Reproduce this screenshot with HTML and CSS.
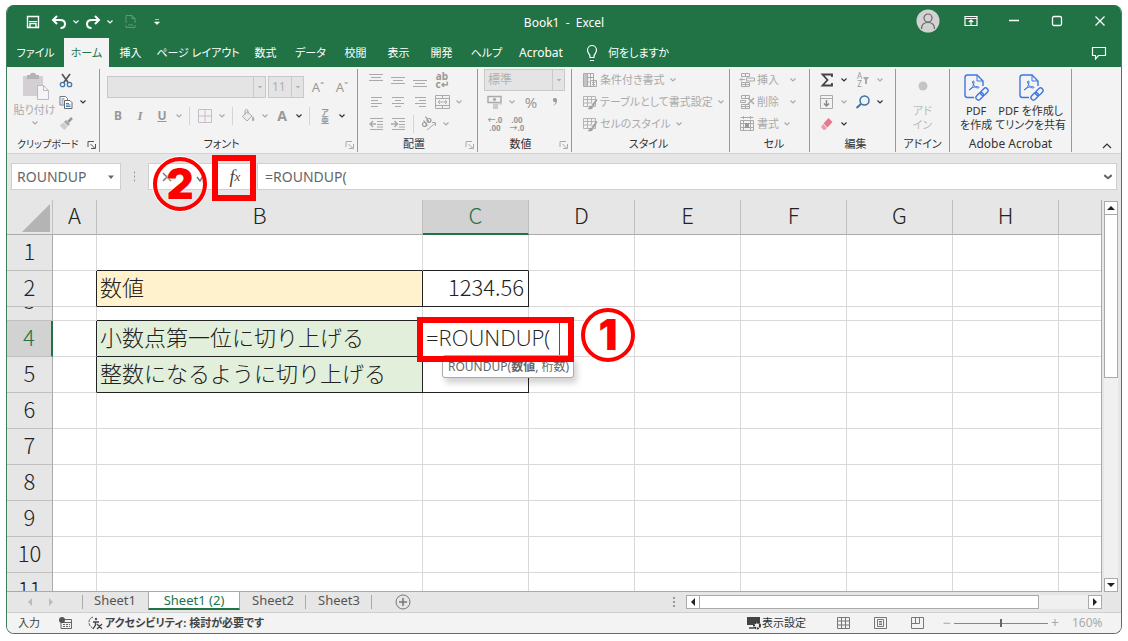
FILE: index.html
```html
<!DOCTYPE html>
<html lang="ja">
<head>
<meta charset="utf-8">
<title>Book1 - Excel</title>
<link rel="stylesheet" href="styles.css">
</head>
<body>
<svg class="defs" aria-hidden="true">
  <defs>
    <symbol id="chev" viewBox="0 0 8 8"><path d="M1.500 2.500 4 5l2.500-2.500" fill="none" stroke="currentColor" stroke-width="1.200"/></symbol>
    <symbol id="down" viewBox="0 0 8 8"><path d="M1 2.500h6L4 6z" fill="currentColor"/></symbol>
    <symbol id="up" viewBox="0 0 8 8"><path d="M0 6h8L4 2z" fill="currentColor"/></symbol>
    <symbol id="launch" viewBox="0 0 10 10"><path d="M1 7V1.500h6M3.500 4l4 4M8.500 4v4.500H4" fill="none" stroke="currentColor"/></symbol>
    <symbol id="pdf" viewBox="0 0 26 28"><g fill="none" stroke="#3f76e0" stroke-width="1.400"><path d="M11 24.500H4.500a2.500 2.500 0 0 1-2.500-2.500V4.500A2.500 2.500 0 0 1 4.500 2H14l6 6v5"/><path d="M14 2v6h6" stroke-width="1"/><path d="M6 17c3-1 5-5 5-8 0-1.500-1.600-1.500-1.400 0 .4 3 3 6 5.400 6 1.500 0 1.200-1.500-.6-1.400-3 .1-6 1-8.400 3.400z" stroke-width="1"/><g transform="rotate(-45 19 21)"><rect x="11.500" y="18.500" width="8.500" height="5" rx="2.500"/><rect x="18" y="18.500" width="8.500" height="5" rx="2.500"/></g></g></symbol>
    <symbol id="tablebrush" viewBox="0 0 16 16"><path d="M1.500 2.500h12v10h-12zM1.500 5.500h12M1.500 9h9M5.500 2.500v10M9.500 2.500v6" fill="none" stroke="#b4b4b4"/><path d="m14.500 5-5 6 2 1.500L15.500 6z" fill="#a0a0a0" stroke="none"/><path d="M9 11.500c-1.500.5-1.500 2.500-3.500 3.500 3 .8 5.500 0 5.500-2z" fill="#a0a0a0" stroke="none"/></symbol>
  </defs>
</svg>

<div class="window">
  <header class="titlebar">
    <div class="quick">
      <button class="ib" aria-label="上書き保存"><svg width="14" height="14" viewBox="0 0 14 14"><path d="M1.500 1.500h11v11h-11zM4 12.500V8.500h6v4" fill="none" stroke="#fff" stroke-width="1.400"/><path d="M3 6.500h8" stroke="#fff" stroke-width="1"/></svg></button>
      <span class="pair"><button class="ib" aria-label="元に戻す"><svg width="16" height="14" viewBox="0 0 16 14"><path d="M6 1 2 5l4 4M2 5h7c3 0 5 1.500 5 4s-2 4-4.500 4" fill="none" stroke="#fff" stroke-width="2"/></svg></button><button class="cb" aria-label="元に戻す一覧"><svg><use href="#chev"/></svg></button><button class="ib" aria-label="やり直し"><svg width="16" height="14" viewBox="0 0 16 14"><path d="m10 1 4 4-4 4M14 5H7C4 5 2 6.500 2 9s2 4 4.500 4" fill="none" stroke="#fff" stroke-width="2"/></svg></button><button class="cb" aria-label="やり直し一覧"><svg><use href="#chev"/></svg></button></span>
      <button class="ib faint" aria-label="リンクを共有"><svg width="14" height="15" viewBox="0 0 14 15"><path d="M2 9V1.500h6l3 3V9M8 1.500v3h3M2 11v2.500h9V11M4 11h5" fill="none" stroke="currentColor"/></svg></button>
      <button class="ib" aria-label="クイック アクセスのカスタマイズ"><svg width="8" height="8" viewBox="0 0 8 8"><path d="M2 1.500h4M1.500 4h5L4 6.500z" stroke="#fff" stroke-width=".6" fill="#fff"/></svg></button>
    </div>
    <h1 class="title">Book1&nbsp; -&nbsp; Excel</h1>
    <div class="syskeys">
      <button aria-label="アカウント"><svg width="24" height="24" viewBox="0 0 24 24"><circle cx="12" cy="12" r="11.500" fill="#d2d2d2"/><g fill="none" stroke="#666" stroke-width="1.200"><circle cx="12" cy="9" r="4"/><path d="M5.500 20c0-4 2.500-6.500 6.500-6.500s6.500 2.500 6.500 6.500"/></g></svg></button>
      <button aria-label="リボンの表示オプション"><svg width="14" height="12" viewBox="0 0 14 12"><path d="M1 1.500h12v9H1zM1 3.500h12M7 10V5M4.800 7 7 5l2.200 2" fill="none" stroke="#fff" stroke-width="1.200"/></svg></button>
      <button aria-label="最小化"><svg width="12" height="12"><path d="M1 5.500h10" stroke="#fff" stroke-width="1.400"/></svg></button>
      <button aria-label="最大化"><svg width="12" height="12"><rect x="1.500" y="1.500" width="9" height="9" rx="1.500" fill="none" stroke="#fff" stroke-width="1.300"/></svg></button>
      <button aria-label="閉じる"><svg width="12" height="12"><path d="m1.500 1.500 9 9m0-9-9 9" stroke="#fff" stroke-width="1.300"/></svg></button>
    </div>
  </header>

  <nav class="tabs">
    <button class="tab file">ファイル</button>
    <button class="tab active">ホーム</button>
    <button class="tab">挿入</button>
    <button class="tab wide">ページ レイアウト</button>
    <button class="tab">数式</button>
    <button class="tab mid">データ</button>
    <button class="tab">校閲</button>
    <button class="tab">表示</button>
    <button class="tab">開発</button>
    <button class="tab mid">ヘルプ</button>
    <button class="tab acro">Acrobat</button>
    <button class="tell"><svg width="12" height="18" viewBox="0 0 12 18"><path d="M4 13.500V12C3.500 10 1.500 9 1.500 6a4.500 4.500 0 0 1 9 0c0 3-2 4-2.500 6v1.500zM4 16.500h4" fill="none" stroke="#fff" stroke-width="1.200"/></svg>何をしますか</button>
    <button class="comment" aria-label="コメント"><svg width="16" height="14" viewBox="0 0 16 14"><path d="M1.500 1.500h13v8h-7L4.500 13V9.500h-3z" fill="none" stroke="#fff" stroke-width="1.200"/></svg></button>
  </nav>

  <section class="ribbon">
    <div class="group g-clip">
      <div class="gbody clip">
        <button class="paste"><svg width="30" height="30" viewBox="0 0 30 30"><path d="M3 5h20v20H3z" fill="#d3cfd3"/><path d="M7 4h3c0-3 6-3 6 0h3v4H7z" fill="#b5b1b5"/><path d="M17.500 14.500h6l5 5v9h-11z" fill="#f6f4f6" stroke="#bdb9bd"/><path d="M23.500 14.500v5h5" fill="none" stroke="#bdb9bd"/></svg><span>貼り付け</span><svg class="chev"><use href="#chev"/></svg></button>
        <div class="clipcol">
          <div class="line"><button class="ib" aria-label="切り取り"><svg width="14" height="15" viewBox="0 0 14 15"><path d="m3 1 6.500 9M11 1 4.500 10" stroke="#555" stroke-width="1.700"/><g fill="none" stroke="#4378a8" stroke-width="1.300"><circle cx="3.500" cy="11.500" r="2.200"/><circle cx="10.500" cy="11.500" r="2.200"/></g></svg></button></div>
          <div class="line"><button class="ib" aria-label="コピー"><svg width="14" height="15" viewBox="0 0 14 15"><path d="M1 1.500h5.500l2 2V10H1z" fill="#fff" stroke="#777"/><path d="M5.500 5.500H11l2 2v6H5.500z" fill="#fff" stroke="#666"/><path d="M2.500 4h3m-3 2h2m-2 2h2M7 8.500h3M7 10h4.500M7 11.500h4.500" stroke="#3f7fc4"/></svg></button><button class="cb dark" aria-label="コピーの種類"><svg><use href="#chev"/></svg></button></div>
          <div class="line"><button class="ib" aria-label="書式のコピー/貼り付け"><svg width="14" height="14" viewBox="0 0 14 14"><path d="m13 1-4 4" stroke="#9b979b" stroke-width="2.500"/><path d="m7 3 4 4-2 2-4-4z" fill="#aaa6aa"/><path d="m4.500 5.500 4 4-3 3.500-5-4.500z" fill="#cfcbcf"/></svg></button></div>
        </div>
      </div>
      <div class="glabel">クリップボード<button class="lb on" aria-label="クリップボードの詳細"><svg><use href="#launch"/></svg></button></div>
    </div>

    <div class="group g-font">
      <div class="gbody font">
        <div class="line fonttop">
          <span class="combo fname"><input aria-label="フォント" value=""><button aria-label="フォント一覧"><svg><use href="#down"/></svg></button></span>
          <span class="combo fsize"><input aria-label="フォント サイズ" value="11"><button aria-label="サイズ一覧"><svg><use href="#down"/></svg></button></span>
          <button class="ib letter" aria-label="拡大">A<sup>ˆ</sup></button><button class="ib letter" aria-label="縮小">A<sup>ˇ</sup></button>
        </div>
        <div class="line">
          <button class="ib"><b>B</b></button><button class="ib"><i class="ital">I</i></button><button class="ib"><u>U</u></button><button class="cb" aria-label="下線"><svg><use href="#chev"/></svg></button>
          <span class="vr"></span>
          <button class="ib" aria-label="罫線"><svg width="14" height="14"><path d="M.5.500h13v13H.5zM7 .5v13M.5 7h13" fill="none" stroke="#c8bcc8"/></svg></button><button class="cb" aria-label="罫線の種類"><svg><use href="#chev"/></svg></button>
          <span class="vr"></span>
          <button class="ib" aria-label="塗りつぶし"><svg width="14" height="14" viewBox="0 0 14 14"><path d="M6 2.500 1.500 7.500l4.500 4.500L11 7z" fill="#eeeaee" stroke="#aaa"/><path d="M4 6V2a1.500 1.500 0 0 1 3 0v3" fill="none" stroke="#aaa"/><path d="M12 7c2 3 1.500 5 0 5s-1.500-2 0-5z" fill="#aaa"/></svg></button><button class="cb" aria-label="塗りつぶしの色"><svg><use href="#chev"/></svg></button>
          <button class="ib"><b class="big">A</b></button><button class="cb dark" aria-label="フォントの色"><svg><use href="#chev"/></svg></button>
          <span class="vr"></span>
          <button class="ib ruby" aria-label="ふりがな"><span>ア</span><span>亜</span></button><button class="cb dark" aria-label="ふりがな設定"><svg><use href="#chev"/></svg></button>
        </div>
      </div>
      <div class="glabel">フォント<button class="lb" aria-label="フォントの詳細"><svg><use href="#launch"/></svg></button></div>
    </div>

    <div class="group g-align">
      <div class="gbody">
        <div class="line">
          <button class="ib" aria-label="上揃え"><svg width="14" height="14"><path d="M0 1.500h14M2 4.500h10M0 7.500h14"/></svg></button><button class="ib" aria-label="上下中央揃え"><svg width="14" height="14"><path d="M0 4.500h14M2 7.500h10M0 10.500h14"/></svg></button><button class="ib" aria-label="下揃え"><svg width="14" height="14"><path d="M0 7.500h14M2 10.500h10M0 13.500h14"/></svg></button><button class="ib wrap" aria-label="折り返して全体を表示する"><span>ab</span><span>c↵</span></button>
        </div>
        <div class="line">
          <button class="ib" aria-label="左揃え"><svg width="14" height="14"><path d="M2 2.500h11M2 5.500h7M2 8.500h11M2 11.500h7"/></svg></button><button class="ib" aria-label="中央揃え"><svg width="14" height="14"><path d="M1 2.500h12M4 5.500h6M1 8.500h12M4 11.500h6"/></svg></button><button class="ib" aria-label="右揃え"><svg width="14" height="14"><path d="M2 2.500h11M6 5.500h7M2 8.500h11M6 11.500h7"/></svg></button><button class="ib" aria-label="セルを結合"><svg width="15" height="14"><path d="M.5.500h14v13H.5zM.5 3.500h14M.5 10.500h14M7.500.500v3M7.500 10.500v3M3 7h9M5 5 3 7l2 2M10 5l2 2-2 2"/></svg></button><button class="cb" aria-label="結合の種類"><svg><use href="#chev"/></svg></button>
        </div>
        <div class="line">
          <button class="ib" aria-label="インデントを減らす"><svg width="14" height="14"><path d="M1 1.500h13M8 4.500h6M8 7.500h6M1 12.500h13M8 10h6"/><path d="M7 7H1m3-3L1 7l3 3" stroke-width="1.500"/></svg></button><button class="ib" aria-label="インデントを増やす"><svg width="14" height="14"><path d="M1 1.500h13M8 4.500h6M8 7.500h6M1 12.500h13M8 10h6"/><path d="M0 7h6M3.500 4l3 3-3 3" stroke-width="1.500"/></svg></button>
          <span class="vr"></span>
          <button class="ib" aria-label="方向"><svg width="16" height="16" viewBox="0 0 16 16"><g stroke="#999" stroke-width="1.200"><circle cx="3.500" cy="8.500" r="2"/><path d="m2.500 4.500 4 5"/><circle cx="8" cy="4.500" r="2"/><path d="m4.500.500 3.500 5.500"/></g><path d="m6 14 8.500-7M11 6.500h3.500V10"/></svg></button><button class="cb" aria-label="方向の種類"><svg><use href="#chev"/></svg></button>
        </div>
      </div>
      <div class="glabel">配置<button class="lb" aria-label="配置の詳細"><svg><use href="#launch"/></svg></button></div>
    </div>

    <div class="group g-num">
      <div class="gbody">
        <div class="line"><span class="combo numfmt"><input aria-label="表示形式" value="標準"><button aria-label="表示形式一覧"><svg><use href="#down"/></svg></button></span></div>
        <div class="line">
          <button class="ib" aria-label="通貨表示形式"><svg width="16" height="14" viewBox="0 0 16 14"><path d="M1 1.500h13v6H1z" stroke-width="1.500"/><circle cx="7.500" cy="4.500" r="1.200" fill="#aaa"/><path d="M6 9.500h5M6 11.500h5M6 13.500h5M11 8.500h4" stroke="#d0c8cc" stroke-width="2"/></svg></button><button class="cb" aria-label="通貨の種類"><svg><use href="#chev"/></svg></button><button class="ib pct">%</button><button class="ib comma" aria-label="桁区切りスタイル"><svg width="6" height="10"><path d="M3 1a2 2 0 1 0 .5 3.900C3.500 6.500 2.500 7.500 1 8.500 4 8 5.200 5.500 5 3A2 2 0 0 0 3 1z" fill="#999" stroke="none"/></svg></button>
        </div>
        <div class="line">
          <button class="ib dec" aria-label="小数点以下の表示桁数を増やす"><span>←.0</span><span>.00</span></button><button class="ib dec" aria-label="小数点以下の表示桁数を減らす"><span>.00</span><span>→.0</span></button>
        </div>
      </div>
      <div class="glabel">数値<button class="lb" aria-label="数値の詳細"><svg><use href="#launch"/></svg></button></div>
    </div>

    <div class="group g-style">
      <div class="gbody">
        <button class="row"><svg class="pic" viewBox="0 0 16 16"><path d="M1.500 1.500h10v13h-10zM5.500 1.500v13M8.500 1.500v6M1.500 5.500h10M1.500 10h6"/><path d="M2 2h3v12H2z" fill="#c4c4c4" stroke="none"/><path d="M8.500 8.500h6v6h-6zM10 13l3.500-3.500M10 10.500h3M10 12.500h3"/></svg><span>条件付き書式</span><svg class="chev"><use href="#chev"/></svg></button>
        <button class="row"><svg class="pic"><use href="#tablebrush"/></svg><span>テーブルとして書式設定</span><svg class="chev"><use href="#chev"/></svg></button>
        <button class="row"><svg class="pic"><use href="#tablebrush"/></svg><span>セルのスタイル</span><svg class="chev"><use href="#chev"/></svg></button>
      </div>
      <div class="glabel">スタイル</div>
    </div>

    <div class="group g-cell">
      <div class="gbody">
        <button class="row"><svg class="pic" viewBox="0 0 16 16"><path d="M2.500 1.500h8v3h-8zM6.500 1.500v3M2.500 10.500h8v4h-8zM6.500 10.500v4M2.500 12.500h8M7.500 6h8v3h-8zM1 7.500h5M3 5.500l-2 2 2 2"/></svg><span>挿入</span><svg class="chev end"><use href="#chev"/></svg></button>
        <button class="row"><svg class="pic" viewBox="0 0 16 16"><path d="M2.500 1.500h8v3h-8zM6.500 1.500v3M2.500 10.500h8v4h-8zM6.500 10.500v4M2.500 12.500h8M1.500 6.500h5v2h-5z"/><path d="m9 4 6 6m0-6-6 6" stroke-width="1.500"/></svg><span>削除</span><svg class="chev end"><use href="#chev"/></svg></button>
        <button class="row"><svg class="pic" viewBox="0 0 16 16"><path d="M1.500 1.500h13M4.500 0v3M11.500 0v3M1.500 4.500h13v10h-13zM4.500 4.500v10M11.500 4.500v10M1.500 7.500h13M1.500 11.500h13"/><path d="M6 7h4v5H6z" fill="#999" stroke="none"/></svg><span>書式</span><svg class="chev"><use href="#chev"/></svg></button>
      </div>
      <div class="glabel">セル</div>
    </div>

    <div class="group g-edit">
      <div class="gbody">
        <div class="line"><button class="ib" aria-label="合計"><svg width="14" height="14"><path d="M12 4V1.500H2.500L7.500 7l-5 5.500H12V10" stroke="#444" stroke-width="1.800"/></svg></button><button class="cb dark" aria-label="合計の種類"><svg><use href="#chev"/></svg></button><button class="ib sort" aria-label="並べ替えとフィルター"><span class="az"><span>A</span><span>Z</span></span><svg width="6" height="8"><path d="M0 1h6L4 4v4H2V4z" fill="#aaa" stroke="none"/></svg></button><button class="cb" aria-label="並べ替えの種類"><svg><use href="#chev"/></svg></button></div>
        <div class="line"><button class="ib" aria-label="フィル"><svg width="14" height="14"><path d="M.5.500h12v13H.5zM.5 3.500h12"/><path d="M6.500 5v6M4 8.500l2.500 2.500L9 8.500" stroke="#888" stroke-width="1.500"/></svg></button><button class="cb" aria-label="フィルの種類"><svg><use href="#chev"/></svg></button><button class="ib find" aria-label="検索と選択"><svg width="16" height="14"><circle cx="9.500" cy="5.500" r="4.500" stroke="#3b73a8" stroke-width="1.500"/><path d="m6 9-4.500 4" stroke="#3b73a8" stroke-width="2"/></svg></button><button class="cb dark" aria-label="検索の種類"><svg><use href="#chev"/></svg></button></div>
        <div class="line"><button class="ib" aria-label="クリア"><svg width="14" height="14"><path d="m8.500 1 4 4-5 5.500-4-4z" fill="#e8788c" stroke="none"/><path d="m3 7 4 4-2 2H3.500L1 10z" fill="#ee9cab" stroke="none"/></svg></button><button class="cb dark" aria-label="クリアの種類"><svg><use href="#chev"/></svg></button></div>
      </div>
      <div class="glabel">編集</div>
    </div>

    <div class="group g-addin">
      <div class="gbody tall"><button class="tile off"><svg width="26" height="28"><circle cx="13" cy="13" r="4.500" fill="#c4c4c4" stroke="none"/></svg><span>アド</span><span>イン</span></button></div>
      <div class="glabel">アドイン</div>
    </div>

    <div class="group g-acro">
      <div class="gbody tall">
        <button class="tile"><svg width="26" height="28"><use href="#pdf"/></svg><span>PDF</span><span>を作成</span></button>
        <button class="tile"><svg width="26" height="28"><use href="#pdf"/></svg><span>PDF を作成し</span><span>てリンクを共有</span></button>
      </div>
      <div class="glabel latin">Adobe Acrobat</div>
    </div>
    <button class="collapse" aria-label="リボンを折りたたむ"><svg width="10" height="6"><path d="m1 5 4-4 4 4" fill="none" stroke="#333" stroke-width="1.200"/></svg></button>
  </section>

  <section class="fbar">
    <span class="namebox"><input aria-label="名前ボックス" value="ROUNDUP"><button aria-label="名前一覧"><svg><use href="#down"/></svg></button></span>
    <span class="dots"></span>
    <div class="fkeys">
      <button aria-label="キャンセル"><svg width="12" height="12"><path d="m2 2 8 8m0-8-8 8" stroke="#777" stroke-width="1.500"/></svg></button>
      <button aria-label="入力"><svg width="12" height="12"><path d="m2 6 3 4 5-8" fill="none" stroke="#777" stroke-width="1.500"/></svg></button>
      <button class="fx" aria-label="関数の挿入">f<sub>x</sub></button>
      <span class="mark boxfx"></span>
      <span class="num n2">2</span>
    </div>
    <span class="formula"><input aria-label="数式バー" value="=ROUNDUP("><button aria-label="数式バーの展開"><svg width="10" height="10" viewBox="0 0 8 8"><path d="M1 2.500 4 5l3-2.500" fill="none" stroke="#666" stroke-width="1.600"/></svg></button></span>
  </section>

  <main class="sheet">
    <div class="gridwrap">
      <table class="grid">
        <colgroup><col class="c-head"><col class="c-a"><col class="c-b"><col class="c-n"><col class="c-n"><col class="c-n"><col class="c-n"><col class="c-n"><col class="c-n"><col></colgroup>
        <thead><tr><th class="corner"><svg width="28" height="28"><path d="M28 0v28H0z" fill="#b4b4b4"/></svg></th><th>A</th><th>B</th><th class="sel">C</th><th>D</th><th>E</th><th>F</th><th>G</th><th>H</th><th></th></tr></thead>
        <tbody>
          <tr><th>1</th><td></td><td class="under"></td><td class="under"></td><td></td><td></td><td></td><td></td><td></td><td></td></tr>
          <tr><th>2</th><td class="edge"></td><td class="bx cream">数値</td><td class="bx right">1234.56</td><td></td><td></td><td></td><td></td><td></td><td></td></tr>
          <tr class="thin"><th><div>3</div></th><td></td><td class="under"></td><td class="under"></td><td></td><td></td><td></td><td></td><td></td><td></td></tr>
          <tr><th class="sel">4</th><td class="edge"></td><td class="bx mint">小数点第一位に切り上げる</td><td class="bx cell"><div class="editor"><input aria-label="C4" value="=ROUNDUP("></div><div class="tip">ROUNDUP(<b>数値</b>, 桁数)</div><span class="mark boxcell"></span><span class="num n1">1</span></td><td></td><td></td><td></td><td></td><td></td><td></td></tr>
          <tr><th>5</th><td class="edge"></td><td class="bx mint">整数になるように切り上げる</td><td class="bx"></td><td></td><td></td><td></td><td></td><td></td><td></td></tr>
          <tr><th>6</th><td></td><td></td><td></td><td></td><td></td><td></td><td></td><td></td><td></td></tr>
          <tr><th>7</th><td></td><td></td><td></td><td></td><td></td><td></td><td></td><td></td><td></td></tr>
          <tr><th>8</th><td></td><td></td><td></td><td></td><td></td><td></td><td></td><td></td><td></td></tr>
          <tr><th>9</th><td></td><td></td><td></td><td></td><td></td><td></td><td></td><td></td><td></td></tr>
          <tr><th>10</th><td></td><td></td><td></td><td></td><td></td><td></td><td></td><td></td><td></td></tr>
          <tr><th>11</th><td></td><td></td><td></td><td></td><td></td><td></td><td></td><td></td><td></td></tr>
        </tbody>
      </table>
    </div>
    <div class="vscroll">
      <button aria-label="上へ"><svg><use href="#up"/></svg></button>
      <span class="vthumb"></span>
      <span class="vtrack"></span>
      <button aria-label="下へ"><svg class="flip"><use href="#up"/></svg></button>
    </div>
  </main>

  <footer class="sheetbar">
    <div class="nav"><svg width="6" height="8"><path d="M5 0v8L1 4z" fill="#bbb"/></svg><svg width="6" height="8"><path d="M1 0v8l4-4z" fill="#bbb"/></svg></div>
    <button class="stab first">Sheet1</button>
    <button class="stab cur">Sheet1 (2)</button>
    <button class="stab">Sheet2</button>
    <button class="stab">Sheet3</button>
    <button class="add" aria-label="新しいシート"><svg width="16" height="16"><circle cx="8" cy="8" r="7" fill="none" stroke="#777"/><path d="M4 8h8M8 4v8" stroke="#777" stroke-width="1.500"/></svg></button>
    <span class="dots grip"></span>
    <div class="hscroll">
      <button aria-label="左へ"><svg class="left"><use href="#up"/></svg></button><span class="hthumb"></span><span class="htrack"></span><button aria-label="右へ"><svg class="rightw"><use href="#up"/></svg></button>
    </div>
  </footer>

  <footer class="status">
    <span class="mode">入力</span>
    <svg class="rec" width="13" height="12"><path d="M2 2.500h10.500v9H2zM2 5.500h10" fill="none" stroke="#666"/><path d="M4 7.500h7M4 9.500h7" stroke="#666" stroke-dasharray="2 1"/><circle cx="3" cy="3" r="3" fill="#555"/></svg>
    <button class="acc"><svg width="15" height="14"><path d="M5 1C2 2 1 4 1 6.500S2.500 11 4.500 12" fill="none" stroke="#555" stroke-dasharray="3 1"/><circle cx="8" cy="3" r="1.200" fill="#555"/><path d="M5 6h6M7.500 6v3L5 13M9 8l5 5M14 8l-5 5" fill="none" stroke="#444" stroke-width="1.300"/></svg>アクセシビリティ: 検討が必要です</button>
    <button class="disp"><svg width="16" height="14"><path d="M1 1h13v8H1z" fill="#444"/><path d="M3 12h5" stroke="#444" stroke-width="1.500"/><circle cx="11" cy="9.500" r="3" fill="#f3f3f3" stroke="#333" stroke-width="2" stroke-dasharray="2 .8"/></svg>表示設定</button>
    <div class="views">
      <button aria-label="標準"><svg width="13" height="12"><path d="M.5.500h12v11H.5zM.5 4h12M.5 8h12M4.500.500v11M8.500.500v11" fill="none" stroke="#777"/></svg></button>
      <button aria-label="ページ レイアウト"><svg width="13" height="12"><path d="M.5.500h12v11H.5zM3.500 2.500h6v7h-6zM5 4.500h3M5 6h3M5 7.500h3" fill="none" stroke="#777"/></svg></button>
      <button aria-label="改ページ プレビュー"><svg width="13" height="12"><path d="M.5.500h12v11H.5zM4.500.500v6M8.500.500v6M.5 6.500h8" fill="none" stroke="#777"/></svg></button>
    </div>
    <button class="zb">−</button><input class="zoom" type="range" aria-label="ズーム" value="50"><button class="zb">+</button>
    <span class="pctz">160%</span>
  </footer>
</div>
</body>
</html>
```

FILE: styles.css
```css
* { box-sizing: border-box; }
body {
  margin: 0;
  height: 100vh;
  padding: 5px 6px 7px;
  background: #fff;
  font: 12px/14px "Noto Sans", "Noto Sans CJK JP", sans-serif;
  font-feature-settings: "palt";
  color: #333;
}
button, input {
  font: inherit;
  font-feature-settings: inherit;
  color: inherit;
  border: 0;
  padding: 0;
  margin: 0;
  background: none;
  min-width: 0;
}
button { display: flex; align-items: center; justify-content: center; white-space: nowrap; }
input { outline: 0; }
svg { flex: none; display: block; }
.defs { position: absolute; width: 0; height: 0; }

.window {
  height: 100%;
  display: flex;
  flex-direction: column;
  border: 1px solid #3f7f5f;
  border-top: 0;
  border-radius: 8px;
  overflow: hidden;
  background: #e6e6e6;
}

/* title bar */
.titlebar { flex: none; display: grid; grid-template-columns: 1fr auto 1fr; height: 33px; background: #217346; color: #fff; }
.quick { display: flex; align-items: center; gap: 4px; padding-left: 15px; }
.pair { display: flex; }
.faint { color: #5d9a78; }
.title { margin: 0; align-self: center; font-size: 12px; font-weight: 400; padding-top: 2px; }
.syskeys { display: flex; justify-content: flex-end; }
.syskeys button { width: 43px; height: 31px; }
.ib { width: 22px; height: 20px; flex: none; }
.cb { width: 12px; height: 20px; flex: none; }
.cb svg, .chev { width: 8px; height: 8px; }
.dark { color: #333; }

/* ribbon tabs */
.tabs { flex: none; display: flex; height: 29px; background: #217346; color: #fff; font-size: 11px; }
.tab { flex: 0 0 43px; }
.tab.file { flex-basis: 57px; }
.tab.active { flex-basis: 45px; background: #f3f3f3; color: #217346; }
.tab.wide { flex-basis: 92px; }
.tab.mid { flex-basis: 47px; }
.tab.acro { flex-basis: 62px; font-size: 12px; }
.tell { gap: 10px; margin-left: 14px; }
.comment { margin-left: auto; width: 44px; }

/* ribbon */
.ribbon { flex: none; display: flex; height: 87px; padding: 2px 0 1px; background: #f3f3f3; color: #aaa; border-bottom: 1px solid #d2d2d2; }
.group { flex: 0 0 auto; display: flex; flex-direction: column; border-right: 1px solid #999; }
.gbody { flex: 1; display: flex; flex-direction: column; }
.line { display: flex; align-items: center; height: 22px; }
.g-align svg, .g-num .ib svg, .g-edit .ib svg, .pic { fill: none; stroke: #aaa; }
.group .cb svg, .group .chev, .group .lb svg { stroke: none; }
.glabel { position: relative; height: 14px; font-size: 11px; line-height: 12px; text-align: center; color: #333; }
.glabel.latin { font-size: 12px; }
.lb { position: absolute; right: 2px; top: 2px; color: #aaa; }
.lb.on { color: #555; }
.lb svg { width: 10px; height: 10px; }
.g-clip { width: 93px; padding-left: 7px; }
.g-clip .glabel { text-align: left; padding-left: 3px; font-size: 10px; }
.gbody.clip { flex-direction: row; }
.paste { flex-direction: column; justify-content: flex-start; width: 41px; padding-top: 2px; font-size: 11px; gap: 2px; }
.clipcol { display: flex; flex-direction: column; }
.g-font { width: 258px; }
.gbody.font { gap: 7px; padding: 7px 0 0 7px; }
.fonttop { gap: 2px; }
.combo { display: flex; height: 22px; border: 1px solid #c9c9c9; background: #e4e4e4; color: #b0b0b0; }
.combo input { flex: 1; width: 10px; padding-left: 3px; font-size: 12px; }
.combo button { width: 12px; border-left: 1px solid #c9c9c9; }
.combo svg { width: 6px; height: 6px; }
.fname { width: 159px; }
.fsize { width: 36px; margin-right: 1px; }
.letter { font-size: 13px; color: #999; }
.letter sup { font-size: 10px; line-height: 8px; }
.font b, .font u { color: #999; font-weight: 700; font-size: 12px; }
.font .big { font-size: 14px; }
.ital { font: italic 700 13px "Liberation Serif", serif; color: #999; }
.vr { width: 9px; height: 18px; flex: none; background: linear-gradient(#d4d4d4, #d4d4d4) center / 1px 100% no-repeat; }
.ruby, .wrap, .dec, .az { flex-direction: column; font-size: 8px; line-height: 8px; font-weight: 700; color: #999; }
.wrap { font-size: 10px; }
.g-align { width: 120px; padding-left: 7px; }
.g-num { width: 94px; padding-left: 6px; }
.numfmt { width: 81px; }
.pct { width: 26px; font-size: 15px; color: #999; }
.g-style { width: 158px; padding-left: 10px; }
.row { height: 22px; justify-content: flex-start; font-size: 11px; gap: 2px; }
.row .chev { margin-left: 2px; }
.row .chev.end { margin-left: 8px; }
.pic { width: 16px; height: 16px; }
.g-cell { width: 80px; padding-left: 9px; }
.g-edit { width: 86px; padding-left: 6px; }
.sort { margin-left: 2px; gap: 1px; }
.find { margin-left: 2px; }
.az { display: flex; font-weight: 400; }
.g-addin { width: 54px; }
.gbody.tall { flex-direction: row; justify-content: center; }
.tile { flex-direction: column; justify-content: flex-start; padding-top: 4px; font-size: 11px; color: #333; }
.tile svg { margin-bottom: 3px; }
.tile.off { color: #bbb; }
.g-acro { width: 122px; }
.g-acro .gbody { gap: 3px; justify-content: flex-start; padding-left: 10px; }
.g-font .glabel, .g-align .glabel, .g-num .glabel, .g-style .glabel { padding-right: 14px; }
.collapse { margin-left: auto; align-self: flex-end; width: 28px; height: 12px; }

/* formula bar */
.fbar { flex: none; display: flex; height: 46px; padding: 9px 4px 10px; font-size: 14px; color: #666; }
.namebox, .formula, .fkeys { display: flex; background: #fff; border: 1px solid #cfcfcf; }
.namebox { width: 110px; }
.namebox input { flex: 1; padding-left: 5px; }
.namebox button { width: 18px; }
.namebox svg { width: 8px; height: 8px; }
.dots { width: 27px; background: radial-gradient(circle, #999 1px, transparent 1px) center / 100% 4px repeat-y; background-clip: content-box; padding: 8px 0; }
.fkeys { position: relative; width: 108px; padding-left: 1px; }
.fkeys button { width: 34px; }
.fkeys .fx { font: italic 400 18px/20px "Liberation Serif", serif; color: #444; }
.fx sub { font-size: 13px; line-height: 8px; }
.formula { flex: 1; margin-left: 1px; }
.formula input { flex: 1; padding-left: 7px; }
.formula button { width: 16px; }

/* callouts */
.mark { position: absolute; border: 6px solid #f00; pointer-events: none; z-index: 3; }
.num {
  position: absolute;
  z-index: 4;
  width: 54px;
  height: 54px;
  border: 4px solid #f00;
  border-radius: 50%;
  box-shadow: 0 0 0 1px #fff;
  color: #f00;
  font: 900 42px/46px Inter, sans-serif;
  text-align: center;
  text-shadow: 0 0 2px #fff, 0 0 2px #fff;
}
.boxfx { left: 63px; top: -9px; width: 44px; height: 46px; }
.n2 { left: 4px; top: -7px; }
.boxcell { left: -6px; top: -4px; width: 157px; height: 45px; }
.n1 { left: 158px; top: -13px; background: #fff; }

/* grid */
.sheet { flex: 1; min-height: 0; display: flex; }
.gridwrap { flex: 1; min-width: 0; overflow: hidden; border-right: 1px solid #aaa; border-bottom: 1px solid #aaa; }
.grid { width: 100%; table-layout: fixed; border-collapse: separate; border-spacing: 0; font: 300 22px/28px "Noto Sans CJK JP", sans-serif; color: #222; }
.c-head { width: 46px; }
.c-a { width: 44px; }
.c-b { width: 326px; }
.c-n { width: 106px; }
.grid th, .grid td { height: 36px; padding: 0 0 6px; white-space: nowrap; border-right: 1px solid #d9d9d9; border-bottom: 1px solid #d9d9d9; }
.grid td { background: #fff; }
.grid th { background: #e6e6e6; font-weight: 300; border-color: #bfbfbf; }
.grid thead th { height: 35px; border-bottom-color: #aaa; }
.grid tbody th { border-right-color: #aaa; }
.grid .sel { background: #d2d2d2; color: #217346; }
.grid thead .sel { border-bottom: 2px solid #217346; padding-bottom: 5px; }
.grid tbody th.sel { border-right: 2px solid #217346; }
.grid td:last-child, .grid thead th:last-child { border-right: 0; }
.grid .corner { padding-bottom: 0; }
.corner svg { margin: 2px 2px 0 auto; }
.grid .bx { border-color: #222; padding-left: 3px; }
.grid .edge { border-right-color: #222; }
.grid .right { text-align: right; padding-right: 4px; }
.grid .cream { background: #fff2cc; }
.grid .mint { background: #e2efda; }
.grid .thin th, .grid .thin td { height: 14px; padding: 0; }
.grid .under { border-bottom-color: #222; }
.thin div { height: 13px; overflow: hidden; display: flex; justify-content: center; align-items: flex-end; line-height: 42px; }
.cell { position: relative; }
.editor { position: absolute; left: 0; top: 0; width: 145px; height: 36px; background: #fff; z-index: 1; padding-left: 3px; }
.editor input { width: 134px; height: 34px; padding-bottom: 2px; border-right: 1px solid #555; font: 300 22px/30px "Open Sans", sans-serif; }
.tip {
  position: absolute;
  left: 19px;
  top: 34px;
  z-index: 2;
  padding: 3px 4px 2px 5px;
  background: #fff;
  border: 1px solid #aaa;
  border-radius: 3px;
  box-shadow: 3px 5px 6px rgba(0, 0, 0, .18);
  font: 12px/16px "Noto Sans", "Noto Sans CJK JP", sans-serif;
  color: #666;
}
.vscroll { flex: none; width: 19px; padding: 1px 3px 0 2px; display: flex; flex-direction: column; }
.vscroll button, .hscroll button { width: 14px; height: 14px; flex: none; background: #fff; border: 1px solid #aaa; color: #222; }
.vscroll svg, .hscroll svg { width: 8px; height: 8px; }
.flip { transform: rotate(180deg); }
.left { transform: rotate(-90deg); }
.rightw { transform: rotate(90deg); }
.vthumb { flex: 163 0 0; width: 14px; background: #fff; border: 1px solid #aaa; border-top: 0; }
.vtrack { flex: 201 0 0; background: #f0f0f0; width: 14px; }

/* sheet tabs */
.sheetbar { flex: none; display: flex; height: 21px; font-size: 13px; color: #555; border-bottom: 1px solid #d0d0d0; }
.nav { display: flex; align-items: center; gap: 15px; width: 75px; padding-left: 20px; }
.stab { width: 66px; line-height: 14px; padding-bottom: 4px; background: linear-gradient(#aaa, #aaa) right 3px / 1px 14px no-repeat; }
.stab.first { background-position: left 3px; }
.stab.cur { width: 92px; height: 18px; padding-bottom: 0; background: #fff; color: #217346; border: 1px solid #aaa; border-top: 0; border-bottom: 2px solid #217346; }
.add { width: 62px; }
.grip { margin-left: auto; padding: 4px 0; width: 24px; }
.hscroll { display: flex; flex: 0 1 416px; height: 14px; margin: 3px 19px 0 0; }
.hthumb { flex: 338 0 0; background: #fff; border: 1px solid #aaa; border-left: 0; }
.htrack { flex: 49 0 0; background: #f0f0f0; }

/* status bar */
.status { flex: none; display: flex; align-items: center; height: 20px; background: #f3f3f3; font-size: 11px; color: #444; }
.mode { width: 52px; padding-left: 11px; }
.rec { margin-right: 16px; }
.acc { gap: 2px; font-weight: 700; }
.disp { margin-left: auto; color: #333; }
.views { display: flex; margin: 0 4px 0 19px; }
.views button { width: 37px; }
.zb { width: 14px; color: #aaa; font-size: 14px; }
.zoom { width: 94px; height: 12px; appearance: none; background: linear-gradient(#888, #888) center / 100% 1px no-repeat; }
.zoom::-webkit-slider-thumb { appearance: none; width: 2px; height: 8px; background: #666; }
.pctz { width: 59px; padding-left: 10px; color: #aaa; font-size: 12px; }
```
